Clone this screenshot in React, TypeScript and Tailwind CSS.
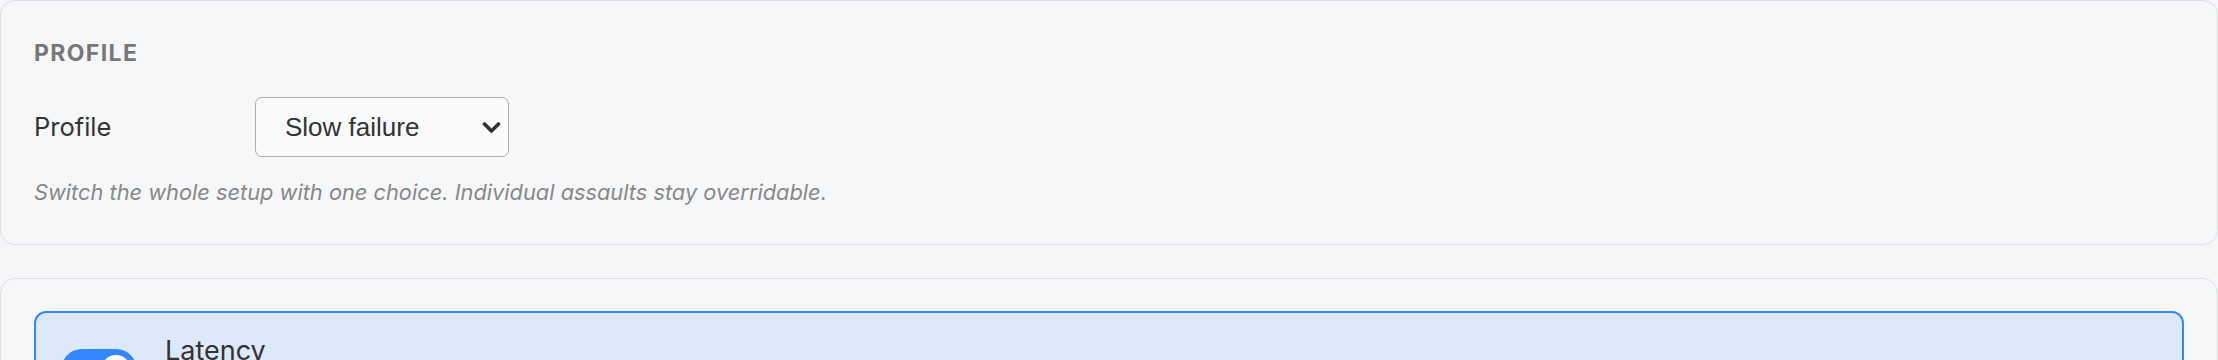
import React, { useState } from "react";

export default function App() {
  const [profile, setProfile] = useState("slow");
  const [latency, setLatency] = useState(true);

  return (
    <div className="min-h-screen bg-[#f5f6f8] font-['Inter',sans-serif] text-[#333]">
      {/* Profile card */}
      <section className="rounded-[15px] border border-[#dcdee1] bg-[#f6f7f9] px-[33px] pt-[38px] pb-[39px]">
        <h2 className="text-[23px] font-bold leading-[28px] tracking-[0.06em] text-[#777]">PROFILE</h2>

        <div className="mt-[30px] flex items-center">
          <label htmlFor="profile" className="w-[221px] text-[25.5px] leading-[30px] text-[#333]">
            Profile
          </label>
          <div className="relative">
            <select
              id="profile"
              value={profile}
              onChange={(e) => setProfile(e.target.value)}
              className="h-[60px] w-[254px] appearance-none rounded-[7px] border-[1.5px] border-[#acacac] bg-white/40 pl-[29px] pr-[40px] font-['Liberation_Sans',Arial,sans-serif] text-[26px] text-[#333] outline-none"
            >
              <option value="off">Off</option>
              <option value="slow">Slow failure</option>
              <option value="chaos">Full chaos</option>
            </select>
            <svg
              className="pointer-events-none absolute right-[8px] top-[24px] h-[13px] w-[19px]"
              viewBox="0 0 19 13"
              fill="none"
              stroke="#333"
              strokeWidth="3.6"
              strokeLinecap="round"
              strokeLinejoin="round"
            >
              <path d="M2.5 3l7 7 7-7" />
            </svg>
          </div>
        </div>

        <p className="mt-[22px] text-[21.8px] italic leading-[26px] text-[#888]">
          Switch the whole setup with one choice. Individual assaults stay overridable.
        </p>
      </section>

      {/* Assaults card */}
      <section className="mt-[33px] rounded-[15px] border border-[#dcdee1] bg-[#f6f7f9] px-[33px] pt-[32px] pb-[33px]">
        <div className="flex gap-[28px] rounded-[12px] border-[2px] border-[#3388ff] bg-[#dde9f9] px-[25px] pt-[22px] pb-[24px]">
          <button
            type="button"
            onClick={() => setLatency(!latency)}
            className={
              "mt-[14px] flex h-[42px] w-[76px] shrink-0 items-center rounded-full px-[6px] " +
              (latency ? "justify-end bg-[#3388ff]" : "justify-start bg-[#c5c9d0]")
            }
          >
            <span className="h-[30px] w-[30px] rounded-full bg-white" />
          </button>
          <div>
            <div className="text-[27px] leading-[32px] text-[#333]">Latency</div>
            <div className="mt-[6px] text-[21px] leading-[26px] text-[#777]">
              Delays each response by a random amount.
            </div>
          </div>
        </div>
      </section>
    </div>
  );
}
